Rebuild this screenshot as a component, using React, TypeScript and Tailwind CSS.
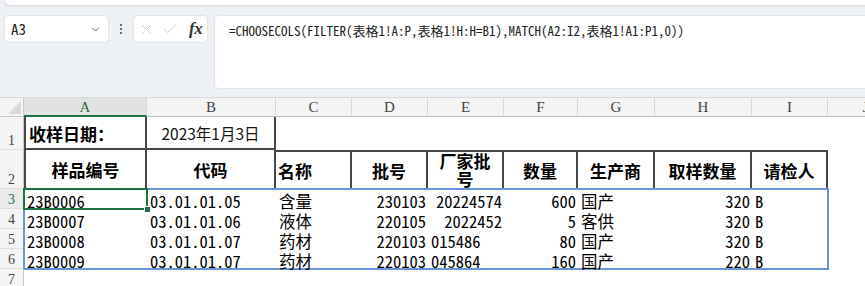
import { ChevronDown, X, Check } from "lucide-react";

const mono = "font-['Noto_Sans_Mono_CJK_SC','Liberation_Mono','Noto_Sans_CJK_SC',monospace]";
const serif = "font-['Liberation_Serif','Noto_Sans_CJK_SC',serif]";
const sans = "font-['Noto_Sans_CJK_SC','Noto_Sans',sans-serif]";

const sheetCols = "grid grid-cols-[24px_123px_129px_76px_76px_76px_74px_77px_97px_76px_76px]";
const spillCols = "grid grid-cols-[123px_129px_76px_76px_76px_74px_77px_97px_76px]";

const letters = ["A", "B", "C", "D", "E", "F", "G", "H", "I", "J"];

const data = [
  ["23B0006", "03.01.01.05", "含量", "230103", "20224574", "600", "国产", "320", "B"],
  ["23B0007", "03.01.01.06", "液体", "220105", "2022452", "5", "客供", "320", "B"],
  ["23B0008", "03.01.01.07", "药材", "220103", "015486", "80", "国产", "320", "B"],
  ["23B0009", "03.01.01.07", "药材", "220103", "045864", "160", "国产", "220", "B"],
];

// right aligned columns (numbers); E depends on row
const rightCols = [3, 5, 7];
const eRight = [true, true, false, false];

function RowHead({ n, active, h }: { n: number; active?: boolean; h: string }) {
  return (
    <div
      className={`${h} flex items-end justify-center border-r border-b border-r-[#c9c9c9] border-b-[#e0e0e0] ${serif} text-[14px] leading-[16px] ${
        active ? "bg-[#ebebeb] text-[#1e7145]" : "bg-[#f4f4f4] text-[#444]"
      }`}
    >
      {n}
    </div>
  );
}

export default function App() {
  return (
    <div className="w-[865px] h-[286px] overflow-hidden bg-[#edf0f4] flex flex-col">
      {/* ribbon edge */}
      <div className="shrink-0 h-[6px] ml-[4px] -mr-[6px] bg-white rounded-b-[6px] border-x border-b border-[#dcdfe4] shadow-[0_1px_2px_rgba(0,0,0,0.06)]" />

      {/* formula bar */}
      <div className="shrink-0 mt-[9px] h-[74px] flex items-start pl-[4px]">
        <div className="w-[105px] h-[28px] bg-white rounded-[5px] border border-[#e0e3e8] flex items-center pl-[6px] pr-[6px]">
          <span className={`${mono} text-[15px] text-[#222] flex-1`}>A3</span>
          <ChevronDown size={13} strokeWidth={1.6} className="text-[#555]" />
        </div>
        <div className="w-[24px] h-[28px] flex flex-col items-center justify-center gap-[2px]">
          <span className="w-[2px] h-[2px] bg-[#444] rounded-full" />
          <span className="w-[2px] h-[2px] bg-[#444] rounded-full" />
          <span className="w-[2px] h-[2px] bg-[#444] rounded-full" />
        </div>
        <div className="w-[75px] h-[28px] bg-white rounded-[5px] border border-[#e0e3e8] flex items-center pl-[4px] gap-[6px]">
          <X size={17} strokeWidth={1.1} className="text-[#c4c7cc]" />
          <Check size={18} strokeWidth={1.1} className="text-[#c4c7cc]" />
          <span className={`${serif} italic font-bold text-[17px] text-[#333] ml-[4px] tracking-[-0.5px]`}>fx</span>
        </div>
        <div className="ml-[6px] -mr-[12px] flex-1 h-[74px] bg-white rounded-[5px] border border-[#e0e3e8] pl-[14px] pt-[2px]">
          <span className={`${mono} text-[13px] text-[#222] whitespace-nowrap`}>
            =CHOOSECOLS(FILTER(表格1!A:P,表格1!H:H=B1),MATCH(A2:I2,表格1!A1:P1,0))
          </span>
        </div>
      </div>

      {/* sheet */}
      <div className="shrink-0 mt-[8px] bg-white flex flex-col">
        {/* column headers */}
        <div className={`${sheetCols} h-[20px] border-t border-[#d6d8dc]`}>
          <div className="bg-[#f4f4f4] border-r border-b border-[#c9c9c9] flex items-end justify-end pr-[2px] pb-[2px]">
            <svg width="13" height="13" viewBox="0 0 13 13">
              <polygon points="13,0 13,13 0,13" fill="#d9d9d9" />
            </svg>
          </div>
          {letters.map((l, i) => (
            <div
              key={l}
              className={`flex items-center justify-center ${serif} text-[15px] leading-[16px] border-r border-r-[#d6d6d6] ${
                i === 0
                  ? "bg-[#e2e2e2] text-[#1e7145] border-b-2 border-b-[#1e7145]"
                  : "bg-[#f4f4f4] text-[#444] border-b border-b-[#bdbdbd]"
              }`}
            >
              {l}
            </div>
          ))}
        </div>

        {/* row 1 */}
        <div className={`${sheetCols} h-[33px]`}>
          <RowHead n={1} h="h-[33px]" />
          <div className={`border-l-2 border-r-2 border-b-2 border-[#474747] flex items-center pl-[3px] pt-[2px] ${sans} font-bold text-[17px] text-black`}>
            收样日期：
          </div>
          <div className={`border-r-2 border-b-2 border-[#474747] flex items-center justify-center pt-[2px] ${sans} text-[15.5px] text-[#111]`}>
            2023年1月3日
          </div>
          <div />
        </div>

        {/* row 2 */}
        <div className={`${sheetCols} h-[39px]`}>
          <RowHead n={2} h="h-[39px]" />
          {["样品编号", "代码", "名称", "批号", "厂家批号", "数量", "生产商", "取样数量", "请检人"].map((t, i) => (
            <div
              key={t}
              className={`border-r-2 border-[#474747] flex items-center ${sans} font-bold text-[17px] leading-[18px] text-black ${
                i === 0 ? "border-l-2" : ""
              } ${i >= 2 ? "border-t-2" : ""} ${i === 2 ? "justify-start pl-[2px]" : "justify-center text-center"}`}
            >
              {i === 4 ? (
                <span className="-mt-[1px]">
                  厂家批
                  <br />号
                </span>
              ) : (
                t
              )}
            </div>
          ))}
          <div />
        </div>

        {/* rows 3-6, spill range */}
        <div className="flex">
          <div className="w-[24px] shrink-0 flex flex-col">
            {[3, 4, 5, 6].map((n) => (
              <RowHead key={n} n={n} active={n === 3} h="h-[20px]" />
            ))}
          </div>
          <div className="w-[804px] shrink-0 flex flex-col outline-2 outline-[#6a94d8] -outline-offset-1">
            {data.map((row, r) => (
              <div key={r} className={`${spillCols} h-[20px]`}>
                {row.map((v, c) => {
                  const right = rightCols.includes(c) || (c === 4 && eRight[r]);
                  const selected = r === 0 && c === 0;
                  return (
                    <div
                      key={c}
                      className={`relative flex items-end ${mono} text-[16.5px] leading-[16px] text-black whitespace-nowrap ${
                        right ? "justify-end pr-[2px]" : "justify-start pl-[3px]"
                      } ${selected ? "outline-2 outline-[#1e7145] -outline-offset-1" : ""}`}
                    >
                      {v}
                      {selected && (
                        <span className="absolute -right-[4px] -bottom-[4px] w-[7px] h-[7px] bg-[#1e7145] border border-white" />
                      )}
                    </div>
                  );
                })}
              </div>
            ))}
          </div>
          <div className="flex-1" />
        </div>

        {/* row 7 */}
        <div className={`${sheetCols} h-[20px]`}>
          <RowHead n={7} h="h-[20px]" />
        </div>
      </div>
    </div>
  );
}
